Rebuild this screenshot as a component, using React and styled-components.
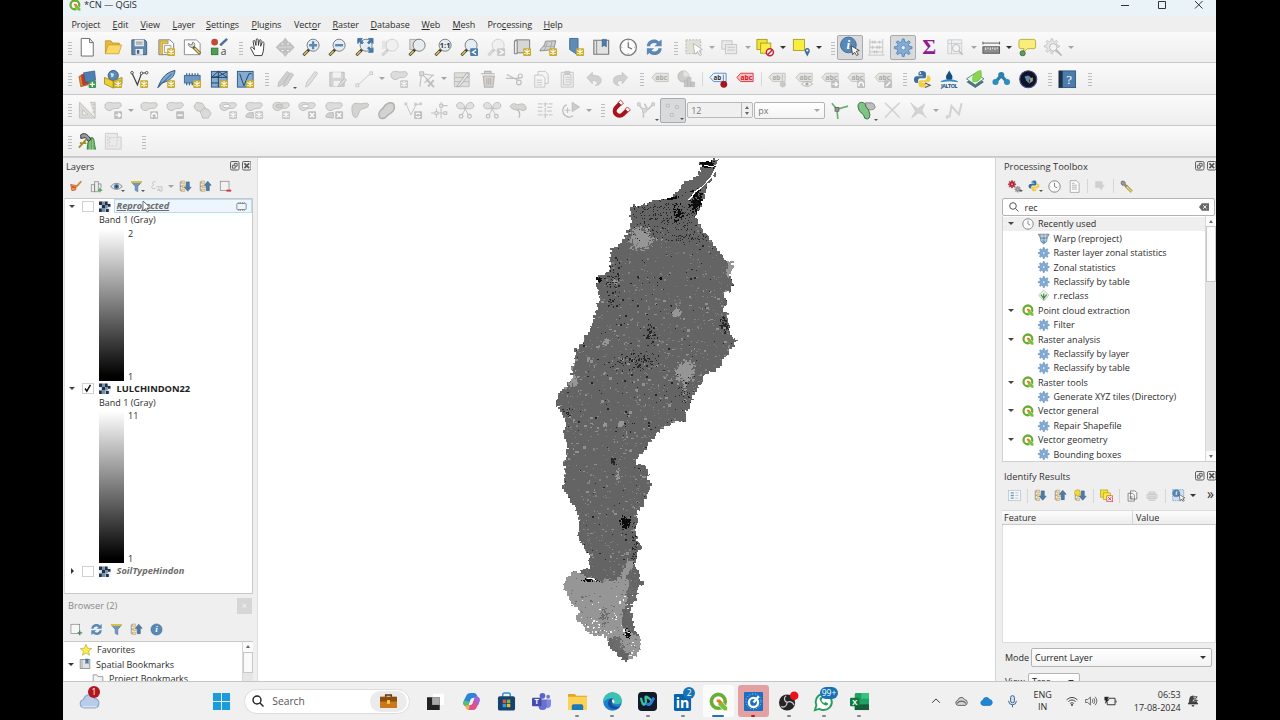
import styled, { createGlobalStyle, css } from "styled-components";

const GlobalStyle = createGlobalStyle`
  * {
    box-sizing: border-box;
  }
  body {
    margin: 0;
    background: #000;
    font-family: "Open Sans", "Noto Sans", sans-serif;
    font-size: 9px;
    color: #2c2c2c;
    overflow: hidden;
  }
`;

/* ---------- icons, drawn on a 20px grid ---------- */

const EDGE = "#bcbcba";
const BLUE = "#5b88b5";

const StarBadge = ({ off }) => (
  <g>
    <rect x="11" y="11" width="8.500" height="8.500" rx="1" fill={off ? "#c8c8c6" : "#c9ae2e"} />
    <path d="M15.200 12v6.500M12.300 13.500l5.800 3.500M12.300 17l5.800-3.500" stroke="#fff" strokeWidth="1.100" />
  </g>
);
const Mag = ({ off, children }) => (
  <g>
    <path d="M8 12.200L1.500 18.700" stroke={off ? "#c9c9c7" : "#3f3a2a"} strokeWidth="3" />
    <path d="M6 14.200L2 18.200" stroke={off ? "#dddddb" : "#e2c159"} strokeWidth="1.600" />
    <circle cx="12" cy="7.800" r="6.500" fill={off ? "#f0f0f0" : "#e6edf2"} stroke={off ? "#cfcfcd" : "#777"} />
    {children}
  </g>
);
const Blob = () => (
  <path
    d="M1 5.500c0-4 4-4.500 8-3.500 3 .6 9-1.500 9.500 1.500s-2.500 5-6 4.600-4 2.600-7 2.200-4.500-2.300-4.500-4.800z"
    fill="#dcdcda"
    stroke={EDGE}
    strokeWidth="1"
  />
);
const GreyBadge = ({ d }) => (
  <g>
    <rect x="11" y="11" width="8.500" height="8.500" rx="1" fill="#bfbfbd" />
    <path d={d} stroke="#fff" strokeWidth="1.500" fill="none" />
  </g>
);
const Tag = ({ text = "abc", fill = "#e4e4e0", line = "#c4c4be", ink = "#aaa" }) => (
  <g>
    <path d="M1 8l4-4.500h13.500v9H5z" fill={fill} stroke={line} />
    <text
      x="4.800"
      y="10.600"
      fontSize="7"
      fontWeight="700"
      fill={ink}
      fontFamily="Open Sans"
      textLength={text.length * 4.200}
      lengthAdjust="spacingAndGlyphs"
    >
      {text}
    </text>
  </g>
);
const ArrowDownUp = ({ up }) => (
  <g>
    <path d="M2 3v14M2 3h5M2 10h5M2 17h5" stroke="#888" fill="none" strokeWidth="1.300" />
    <path d="M4 1.500h5v4H4zM5 8h5v4H5zM4 14.500h5v4H4z" fill="#f0d9a0" stroke="#b79a62" strokeWidth=".8" />
    <path
      d={up ? "M14 2l5.500 6.500h-3V17h-5V8.500h-3z" : "M14 18l5.500-6.500h-3V3h-5v8.500h-3z"}
      fill="#4c7cab"
      stroke="#30567d"
      strokeWidth=".8"
    />
  </g>
);
const gearPath =
  "M9 1h2l.5 3 2 .8L16 3l1.500 1.500-1.800 2.500.8 2 3 .5v2l-3 .5-.8 2 1.800 2.500L16 18l-2.500-1.800-2 .8-.5 3H9l-.5-3-2-.8L4 18l-1.500-1.500L4.300 14l-.8-2-3-.5v-2l3-.5.8-2L2.500 4.500 4 3l2.500 1.800 2-.8z";
const Gear = ({ fill = "#82abd8", line = "#5280b0" }) => (
  <g>
    <path d={gearPath} fill={fill} stroke={line} strokeWidth=".9" />
    <circle cx="10" cy="10.500" r="2.400" fill="#e6eef6" stroke={line} strokeWidth=".8" />
  </g>
);
const Scissors = () => (
  <g fill="#e0e0de" stroke={EDGE}>
    <path d="M9.500 7C9 2 4 0 1.500 3S2 10 9.500 8zM10.500 7C11 2 16 0 18.500 3S18 10 10.500 8z" />
    <path d="M9 7l4.500 8M11 7l-4.500 8" />
    <circle cx="5.500" cy="16.500" r="2" fill="none" strokeWidth="1.300" />
    <circle cx="14.500" cy="16.500" r="2" fill="none" strokeWidth="1.300" />
  </g>
);
const Python = () => (
  <g>
    <path d="M10 1C6 1 6 3 6 4v2h4.500v.7H4C1.500 6.700 1 9 1 10.500S2 14 4 14h1.500v-2.500C5.500 9.500 7 9 8 9h4c1.500 0 2-1 2-2V4c0-2-1.500-3-4-3z" fill="#3b6f9f" />
    <path d="M10 19c4 0 4-2 4-3v-2H9.500v-.7H16c2.500 0 3-2.300 3-3.800S18 6 16 6h-1v2.500c0 2-1.500 2.500-3 2.500H8c-1.500 0-2 1-2 2v3c0 2 1.500 3 4 3z" fill="#f4cd46" />
    <circle cx="8" cy="3.400" r=".9" fill="#fff" />
  </g>
);
const QLogo = () => (
  <g>
    <circle cx="9.800" cy="9.800" r="7.300" fill="#fff" stroke="#6aad35" strokeWidth="3.800" />
    <path d="M9.500 9.500h3.500l6.500 6.500v3.800h-3.800l-6.200-6.200z" fill="#7cbf3c" stroke="#fff" strokeWidth=".7" />
    <path d="M8 8h3.500l3 3-3 .5-3.500-1z" fill="#ee7913" />
  </g>
);
const Refresh = () => (
  <g fill={BLUE}>
    <path d="M2 9c0-5 4-7.500 8-7.500 2 0 4 .7 5 2.200l3-2.200v7.500h-8l3-2.500C11 4.800 6 5 5.500 9z" />
    <path d="M18 11c0 5-4 7.500-8 7.500-2 0-4-.7-5-2.200l-3 2.200V11h8l-3 2.500c2 1.700 7 1.500 7.500-2.500z" />
  </g>
);
const Clock = () => (
  <g>
    <circle cx="10" cy="10" r="8.800" fill="#fbfbfb" stroke="#777" strokeWidth="1.300" />
    <path d="M10 4.500V10l4 2" fill="none" stroke="#666" strokeWidth="1.200" />
    <path d="M10 2.500v1M10 16.500v1M2.500 10h1M16.500 10h1" stroke="#888" />
  </g>
);
const Info = ({ r = 8.5 }) => (
  <g>
    <circle cx="10" cy="10" r={r} fill="#5788b8" stroke="#3f6b97" />
    <text x="10" y="14.500" fontSize="14" fontStyle="italic" fontWeight="700" textAnchor="middle" fill="#fff" fontFamily="Liberation Serif">
      i
    </text>
  </g>
);
const Cursor = () => <path d="M11 8.500l1.500 9.500 2.200-2.600 2.300 3.600 1.800-1.200-2.300-3.400 3.300-.8z" fill="#fff" stroke="#333" strokeWidth=".9" />;
const Funnel = () => (
  <g>
    <path d="M2 3h16l-6 7v8l-4-2v-6z" fill="#6f98bf" stroke="#4a6f94" strokeWidth=".8" />
    <path d="M1.500 1.500h17v3h-17z" fill="#d9c341" />
  </g>
);
const CloudShape = ({ fill, line }) => (
  <path d="M5 16a4 4 0 01-.6-7.900A5.500 5.500 0 0114.800 7 4.600 4.600 0 0115.500 16z" fill={fill} stroke={line} strokeWidth="1.200" />
);
const Mesh = ({ d, children }) => (
  <g>
    <rect x="1.500" y="1.500" width="17" height="17" fill="#84acd2" stroke="#2f567e" />
    <path d={d} fill="none" stroke="#1f3e5c" />
    {children}
  </g>
);

const ICONS = {
  new: <path d="M3.500 .5h9l4 4.500v14.500h-13zM12.500 .5V5h4" fill="#fff" stroke="#666" />,
  open: (
    <g>
      <path d="M1.500 17V3h6l2 2.500h7V8" fill="#e3b93c" stroke="#b98e22" strokeWidth=".8" />
      <path d="M1.500 17l3-9.500h14.500l-3 9.500z" fill="#fbd969" stroke="#c49a2c" strokeWidth=".8" />
    </g>
  ),
  save: (
    <g>
      <path d="M2 2h14l2 2v14H2z" fill="#6388ad" stroke="#43607c" />
      <path d="M5 2h10v7H5zM6 12h8v6H6z" fill="#e6ebef" />
      <path d="M6.500 4.500h7M6.500 6.500h7" stroke="#888" />
      <path d="M7.500 13h2.500v4H7.500z" fill="#43607c" />
    </g>
  ),
  layout: (
    <g>
      <path d="M2 2h12l4 4v12H2z" fill="#fff" stroke="#777" />
      <path d="M3 3h9v3H6v12H3z" fill="#e7c34b" stroke="#9c7f24" strokeWidth=".6" />
      <path d="M8 8h7v8H8z" fill="#f6f6f6" stroke="#999" />
      <StarBadge />
    </g>
  ),
  layouts: (
    <g>
      <path d="M1.500 2h13l4 4v12h-17z" fill="#fff" stroke="#888" />
      <path d="M6 5.500l1.500 2L10 7l.5-2.500c2.500.5 3 3.500 1 5s-4 .5-5-1-1-2-.5-3z" fill="#ddd" stroke="#777" />
      <path d="M11 9.500l7.500 7.500" stroke="#6b6034" strokeWidth="3.400" />
      <path d="M12.500 11l5.500 5.500" stroke="#e7cc67" strokeWidth="1.800" />
    </g>
  ),
  style: (
    <g>
      <circle cx="5" cy="4.500" r="3.600" fill="#c24a32" />
      <path d="M11 8l7.500-7" stroke="#4d7399" strokeWidth="2.800" />
      <rect x="1.500" y="11" width="7" height="7" fill="#4f9e55" stroke="#2f7a38" />
      <text x="11.500" y="18" fontSize="11" fill="#444" fontFamily="Open Sans">
        a
      </text>
    </g>
  ),
  hand: (
    <path
      d="M6 19L2 11.500c-.8-1.600 1-2.400 2-1L6 12.500 4.500 4c-.2-1.700 1.700-1.700 2-.3L7.500 8 7.800 2c.1-1.600 2-1.600 2.100 0L10.200 8l1-5.300c.3-1.400 2.100-1.200 1.900.4L12.600 9l1.500-4c.6-1.300 2.500-.6 2.100.8C15.500 10 16.500 13 14 19z"
      fill="#fff"
      stroke="#333"
    />
  ),
  pan: <path d="M10 1l3 4h-2v3h4V6l4 4-4 4v-2h-4v3h2l-3 4-3-4h2v-3H5v2l-4-4 4-4v2h4V5H7z" fill="#cfcfcd" stroke="#bfbfbd" strokeWidth="1.800" />,
  zoomIn: (
    <Mag>
      <path d="M12 3.500v8.600M7.700 7.800h8.600" stroke={BLUE} strokeWidth="2.600" />
    </Mag>
  ),
  zoomOut: (
    <Mag>
      <path d="M7.700 7.800h8.600" stroke={BLUE} strokeWidth="2.600" />
    </Mag>
  ),
  zoomFull: (
    <g>
      <Mag />
      <path
        d="M3 .5h5L6.500 2.500 9 5 7.500 6.500 5 4 3 6zM19.500 .5h-5l1.500 2L13.500 5 15 6.500 17.500 4l2 2zM19.500 15.500h-5l1.500-2-2.500-2.500L15 9.500l2.500 2.500 2-1.500z"
        fill="#4577a8"
        stroke="#4577a8"
      />
    </g>
  ),
  zoomSel: (
    <g>
      <rect x="1" y="3" width="10" height="9" fill="#e4e4e2" />
      <Mag off />
    </g>
  ),
  zoomLayer: (
    <g>
      <rect x="2" y="1.500" width="10" height="11" fill="#ddd" stroke="#aaa" />
      <Mag />
    </g>
  ),
  zoomNative: (
    <Mag>
      <text x="12" y="10.800" fontSize="8" fontWeight="700" textAnchor="middle" fontFamily="Open Sans" fill="#333">
        1:1
      </text>
    </Mag>
  ),
  zoomLast: (
    <Mag>
      <rect x="11" y="11" width="8.500" height="8.500" rx="1" fill="#4c7cab" />
      <path d="M17.500 12.700L13.500 15.300l4 2.500" stroke="#fff" fill="none" strokeWidth="1.500" />
    </Mag>
  ),
  zoomNext: (
    <Mag off>
      <rect x="11" y="11" width="8.500" height="8.500" rx="1" fill="#c8c8c6" />
      <path d="M13.500 12.700l4 2.600-4 2.500" stroke="#fff" fill="none" strokeWidth="1.500" />
    </Mag>
  ),
  mapNew: (
    <g>
      <path d="M3 2h15v14H3z" fill="#d6d6d6" stroke="#777" />
      <path d="M1.500 3h3v14h-3z" fill="#eee" stroke="#777" />
      <StarBadge />
    </g>
  ),
  map3d: (
    <g>
      <path d="M7 3.500l11-.5-2 9.500-15 1.500c1-4 5-4 6-10.500z" fill="#d0d0ce" stroke="#888" />
      <path d="M9 5l-3 8M14 3.500l-2 10M5 9h12" stroke="#aaa" fill="none" />
      <StarBadge />
    </g>
  ),
  bookmarkNew: (
    <g>
      <path d="M4 .5h9v18l-4.500-3L4 12.500z" fill="#5f8bb5" stroke="#3f6a92" />
      <StarBadge />
    </g>
  ),
  bookmark: (
    <g>
      <path d="M2 2.500h16v15H2z" fill="#e2e2e2" stroke="#777" strokeWidth="1.200" />
      <path d="M5 2.500v15" stroke="#888" />
      <path d="M11 1.500h4.500v8L13.200 8 11 9.500z" fill="#4c7cab" stroke="#2d5780" strokeWidth=".6" />
    </g>
  ),
  clock: <Clock />,
  refresh: <Refresh />,
  select: (
    <g>
      <rect x="1" y="2" width="16" height="15" fill="#dfe0d6" stroke="#b5b5ac" strokeDasharray="2 1.500" />
      <path d="M9 6l1.500 11.500 3-3 2.500 4.500 1.800-1-2.500-4.500 3.500-1z" fill="#fff" stroke="#b5b5b3" />
    </g>
  ),
  selectForm: (
    <g fill="#e9e9e9" stroke="#c4c4c4">
      <rect x="2" y="3" width="11" height="9" />
      <rect x="6" y="7" width="12" height="10" />
      <path d="M8 10h8M8 13h8" />
    </g>
  ),
  deselect: (
    <g>
      <rect x="1" y="1.500" width="11" height="11" fill="#f3e52d" stroke="#a99d23" />
      <rect x="5" y="5.500" width="11" height="11" fill="#f8ec45" stroke="#a99d23" />
      <circle cx="15" cy="15.500" r="3.800" fill="#fff" stroke="#c8202c" strokeWidth="1.600" />
      <path d="M12.500 18l5-5" stroke="#c8202c" strokeWidth="1.600" />
    </g>
  ),
  selectLoc: (
    <g>
      <rect x="1.500" y="1.500" width="12" height="12" fill="#f9ee3e" stroke="#aaa028" />
      <path d="M16.500 20l-2.500-5a2.800 2.800 0 115 0z" fill="#3c6f9e" />
      <circle cx="16.500" cy="13.500" r="1.200" fill="#fff" />
    </g>
  ),
  identify: (
    <g>
      <g transform="translate(-2 -2.500)">
        <Info />
      </g>
      <Cursor />
    </g>
  ),
  abacus: (
    <g fill="none" stroke="#c4c4c4">
      <path d="M3 1v17M17 1v17M1 18.500h18M3 4.500h14M3 10h14M3 15h14" />
      <path d="M6 3v3M8.500 3v3M13.500 3v3M6 8.500v3M11 8.500v3M13.500 8.500v3M8 13.500v3M10.500 13.500v3" strokeWidth="1.700" />
    </g>
  ),
  gear: <Gear />,
  sigma: (
    <text x="10" y="17.500" fontSize="23" fontWeight="700" textAnchor="middle" fill="#8d1d8f" fontFamily="Liberation Serif">
      Σ
    </text>
  ),
  tableFind: (
    <g>
      <path d="M2 2h15v15H2zM2 6h15M6 2v15" fill="#f0f0f0" stroke="#c8ccd0" />
      <circle cx="11" cy="11" r="4" fill="#f3f3f3" stroke="#b8b8b8" />
      <path d="M14 14l4 4" stroke="#bbb" strokeWidth="1.600" />
    </g>
  ),
  ruler: (
    <g>
      <path d="M1 5.500h18M1 4v3M19 4v3" stroke="#555" />
      <rect x="1" y="9.500" width="18" height="7" fill="#8d8d8d" stroke="#555" />
      <path d="M4 10v3M6.500 10v2M9 10v3M11.500 10v2M14 10v3M16.500 10v2" stroke="#eee" />
    </g>
  ),
  tip: (
    <g>
      <path d="M3 1.500h14q2 0 2 2v6q0 2-2 2h-6.500l-5 4 1-4H3q-2 0-2-2v-6q0-2 2-2z" fill="#f9ee79" stroke="#b8ad3b" />
      <circle cx="5" cy="16.500" r="2.800" fill="#5f9a60" stroke="#3e743f" />
    </g>
  ),
  gearOff: (
    <g>
      <g transform="scale(.85)">
        <Gear fill="#e6e6e6" line="#bdbdbd" />
      </g>
      <circle cx="10" cy="10" r="4" fill="#f3f3f3" stroke="#bbb" />
      <path d="M13 13l6 6" stroke="#bbb" strokeWidth="2" />
    </g>
  ),

  dsManager: (
    <g>
      <path d="M1 7l7-3 3 12-8 2z" fill="#e08a2c" stroke="#8a4a18" strokeWidth=".7" />
      <path d="M3 5l9-3 2 12-9 3z" fill="#c33a2c" />
      <path d="M6 3l12-2 1 10-11 2.500z" fill="#4c7fb3" stroke="#2f567e" strokeWidth=".7" />
      <rect x="11.500" y="11.500" width="8" height="8" rx="1" fill="#3d9b55" />
      <path d="M15.500 12.700v5.600M12.700 15.500h5.600" stroke="#fff" strokeWidth="1.500" />
    </g>
  ),
  geopackage: (
    <g>
      <circle cx="10" cy="6" r="5.500" fill="#5b88b5" stroke="#2f567e" />
      <path d="M7 3l4 1-1 3-2 1z" fill="#cfe0ee" />
      <path d="M.5 8l9.500 4 9.500-4v7L10 19.500.5 15z" fill="#f0cf32" stroke="#8f7b17" strokeWidth=".8" />
      <path d="M10 12v7" stroke="#8f7b17" />
      <StarBadge />
    </g>
  ),
  shapefile: (
    <g>
      <path d="M2 3L8 16l4.500-12.500 5.500-.5" fill="none" stroke="#444" strokeWidth="1.300" />
      <g fill="#fff" stroke="#444">
        <circle cx="2.200" cy="3" r="1.400" />
        <circle cx="12.500" cy="3.500" r="1.400" />
        <circle cx="18" cy="3" r="1.400" />
      </g>
      <StarBadge />
    </g>
  ),
  feather: (
    <g>
      <path d="M1 19C5 8 10 2.500 19.500.5 19 7 14 12 5 14z" fill="#7fa9d0" stroke="#28527a" />
      <path d="M1 19L16 4" stroke="#28527a" />
      <StarBadge />
    </g>
  ),
  chip: (
    <g>
      <path d="M4 3.500v13M7 3.500v13M10 3.500v13M13 3.500v13M16 3.500v13" stroke="#3f6a92" strokeWidth="1.400" />
      <rect x="1.500" y="6" width="17" height="8" fill="#6c98c3" stroke="#3f6a92" />
      <StarBadge />
    </g>
  ),
  mesh: (
    <Mesh d="M1.500 8h17M9 1.500v17M1.500 8L9 1.500l9.500 6.500M1.500 8l7.500-1 9.500-5M1.500 14h8">
      <StarBadge />
    </Mesh>
  ),
  virtual: (
    <Mesh d="M4 4l4.500 13L14 4h3">
      <StarBadge />
    </Mesh>
  ),
  pencils: (
    <g fill="#cfcfcd" stroke="#bababa" strokeWidth=".8">
      <path d="M2 18l1-5L12 1.500l3 2L7 16zM8 18l1-5 7-10 3 2-7 11z" />
    </g>
  ),
  pencil: <path d="M4 18.500l1-5L14 1.500l3 2L8 16z" fill="#dfdfdb" stroke="#c4c4c0" />,
  saveEdits: (
    <g>
      <path d="M2 2.500h15.500v15H2z" fill="#d4d4d4" stroke="#bdbdbd" />
      <path d="M5 2.500h9v6H5zM6 12h7v5.500H6z" fill="#f2f2f2" />
      <path d="M11 18l1-3 6-6 2 2-6 6z" fill="#ddd" stroke="#bbb" />
    </g>
  ),
  line: (
    <g stroke="#c9c9c9" fill="#eee">
      <path d="M3 16.500L17 3.500" />
      <rect x="1" y="15" width="3" height="3" />
      <rect x="16" y="2" width="3" height="3" />
    </g>
  ),
  blobNew: (
    <g>
      <Blob />
      <StarBadge off />
    </g>
  ),
  vertex: (
    <g stroke="#c0c0c0" fill="none" strokeWidth="1.200">
      <path d="M3 18l2-14 13 2M5 4l8 8M8 14L18 5" />
      <rect x="3" y="2" width="4" height="4" fill="#ddd" />
      <path d="M10 10l8.500 8.500M18 11l-6 7" strokeWidth="2.200" />
    </g>
  ),
  form: (
    <g>
      <path d="M1.500 3h16v15h-16zM1.500 8h16M1.500 12.500h16" fill="#dedfd9" stroke="#bbb" />
      <path d="M4 18L15 3l2.500 1.500L7 18z" fill="#e6e6e6" stroke="#aaa" />
    </g>
  ),
  trash: (
    <g fill="#d5d1cf" stroke="#b8b3b1" strokeWidth="1.200">
      <path d="M2 4h15M6 4V1.500h7V4M4.500 6.500h12L15 18.500H6z" />
      <path d="M8.500 9v7M10.500 9v7M12.500 9v7" />
    </g>
  ),
  cut: (
    <g fill="none" stroke="#bfbfbf" strokeWidth="1.300">
      <path d="M2 5l12 6M1 9h14" />
      <circle cx="16.500" cy="6.500" r="2.200" />
      <circle cx="15" cy="13.500" r="2.500" />
    </g>
  ),
  copy: (
    <g fill="#f4f4f4" stroke="#c6c6c6">
      <path d="M6.500 1.500h8l3 3v10h-11z" />
      <path d="M3 5.500h8l3 3v10H3zM5 11h6M5 13.500h6M5 16h6" />
    </g>
  ),
  paste: (
    <g fill="#efefef" stroke="#c4c4c4">
      <path d="M3.500 2.500h13v16h-13z" />
      <path d="M6 5h8v11H6zM8 8h5M8 10.500h5M8 13h5" />
      <path d="M7.500 1.500h5v3h-5z" fill="#ccc" />
    </g>
  ),
  undo: <path d="M2 8l6-5.500v3.300c7 0 9.500 2 9.500 5.500s-3 5.500-6.500 5.500c3.500-1 3-6-3-5.500V15z" fill="#d0d0d0" stroke="#c0c0c0" strokeWidth=".7" />,
  redo: <path d="M18 8l-6-5.500v3.300c-7 0-9.500 2-9.500 5.500s3 5.500 6.500 5.500c-3.500-1-3-6 3-5.500V15z" fill="#d0d0d0" stroke="#c0c0c0" strokeWidth=".7" />,
  tag: <Tag />,
  diagram: (
    <g>
      <circle cx="7" cy="7" r="6" fill="#cdcdcb" stroke="#b8b8b6" />
      <path d="M7 7V1a6 6 0 016 6z" fill="#e3e3e1" />
      <path d="M8 18V11h3.500v7zM11.500 18V8H15v10zM15 18v-5h4v5z" fill="#c6c6c4" stroke="#b3b3b1" strokeWidth=".6" />
    </g>
  ),
  tagPin: (
    <g>
      <Tag text="ab" fill="#eaf2fb" line="#4f8bd1" ink="#333" />
      <path d="M15.500 5v8" stroke="#777" />
      <circle cx="16" cy="15.500" r="3.700" fill="#a8141d" />
    </g>
  ),
  tagRed: <Tag fill="#f9bfc2" line="#d9323b" ink="#c81722" />,
  tagOff: (
    <g>
      <Tag text="ab" />
      <path d="M15.500 5v8" stroke="#bbb" />
      <circle cx="16" cy="15.500" r="3.300" fill="#c8c8c6" />
    </g>
  ),
  tagEye: (
    <g>
      <Tag />
      <path d="M7 15q5.500-5.500 12 0-6.500 5.500-12 0z" fill="#f4f4f4" stroke="#b3b3b1" />
      <circle cx="13" cy="15" r="1.700" fill="#aaa" />
    </g>
  ),
  tagMove: (
    <g>
      <Tag />
      <GreyBadge d="M12.500 15.300h5M15.500 13l2.200 2.300-2.200 2.200" />
    </g>
  ),
  tagRotate: (
    <g>
      <Tag />
      <GreyBadge d="M13.500 17.500a2.500 2.500 0 113.500 0" />
    </g>
  ),
  tagEdit: (
    <g>
      <Tag />
      <GreyBadge d="M13 17.500l4.500-4.500" />
    </g>
  ),
  python: (
    <g>
      <Python />
      <path d="M13 14l5.500 2.500-5.500 2.500" fill="none" stroke="#555" strokeWidth="1.200" />
    </g>
  ),
  jaltol: (
    <g>
      <path d="M10 .5c2 4 3.500 5 3.500 7a3.500 3.500 0 01-7 0c0-2 1.500-3 3.500-7z" fill="#144f80" />
      <path d="M1 12.500q9-4 18 0-9-1.500-18 0z" fill="#2a87c0" stroke="#2a87c0" />
      <text x="1" y="19" fontSize="5.800" fontWeight="700" fill="#164a78" fontFamily="Open Sans" textLength="18">
        JALTOL
      </text>
    </g>
  ),
  leafMap: (
    <g>
      <path d="M.5 13L10 7l9.500 6-9.500 6.500z" fill="#4d7083" />
      <path d="M.5 9.500L10 3.500l9.500 6L10 16z" fill="#e8f4ee" stroke="#4d8f7c" />
      <path d="M7.500 12.500C6 6 10 1.500 16 .5c2 7-1 13-8.500 12z" fill="#8cd64a" stroke="#5bab2b" strokeWidth=".6" />
    </g>
  ),
  nodes: (
    <g>
      <path d="M3.500 13L10 6l6.500 7" stroke="#2d7fad" strokeWidth="3.500" fill="none" />
      <circle cx="10" cy="5.500" r="3.300" fill="#2d7fad" />
      <circle cx="3.800" cy="13" r="3.300" fill="#2d8dbd" />
      <circle cx="16.200" cy="13" r="3.300" fill="#2d8dbd" />
    </g>
  ),
  globe: (
    <g>
      <circle cx="10" cy="10" r="9.200" fill="#10142a" stroke="#4a4b80" strokeWidth="1.200" />
      <path d="M6 7l4-1 3 2-2 3 1 4-4-3z" fill="#5f89a8" />
      <path d="M12 9l3-1v4l-3 2z" fill="#b3a179" />
    </g>
  ),
  help: (
    <g>
      <rect x="1" y="1" width="18" height="18" fill="#4c7cab" stroke="#33587c" />
      <rect x="1" y="1" width="4" height="18" fill="#1e2f40" />
      <text x="12" y="15" fontSize="14" textAnchor="middle" fill="#fff" fontFamily="Liberation Serif">
        ?
      </text>
    </g>
  ),

  triangle: <path d="M1.500 1l17 17.500h-17zM5 9.500l5.500 5.500H5zM13 1.500h5.500v17M15.500 4h3M15.500 8h3M15.500 12h3" fill="#dcdad8" stroke="#c2c0be" fillRule="evenodd" />,
  blobMove: (
    <g>
      <Blob />
      <GreyBadge d="M12.500 15.300h5M15.500 13l2.200 2.300-2.200 2.200" />
    </g>
  ),
  blobRotate: (
    <g>
      <Blob />
      <GreyBadge d="M13.500 17.500a2.500 2.500 0 113.500 0" />
    </g>
  ),
  blobScale: (
    <g>
      <Blob />
      <GreyBadge d="M12.500 15.300h5.500" />
    </g>
  ),
  hexes: (
    <g fill="#dadad8" stroke="#bcbcba">
      <path d="M1 6l3-4.500 6 1 3.500 5-3.500 4-6-1z" />
      <path d="M8 12l3-4 5.500 1 3 4.500-3 5-6 0z" />
    </g>
  ),
  ring: (
    <g>
      <Blob />
      <ellipse cx="8" cy="5.500" rx="4" ry="2" fill="#f6f6f6" stroke="#bbb" />
      <StarBadge off />
    </g>
  ),
  part: (
    <g>
      <Blob />
      <path d="M1 17.500c0-5 4-5 8-5v6z" fill="#d0d0ce" stroke="#bbb" />
      <StarBadge off />
    </g>
  ),
  fillRing: (
    <g>
      <Blob />
      <ellipse cx="8" cy="5.500" rx="4" ry="2" fill="#cfcfcd" stroke="#bbb" />
      <StarBadge off />
    </g>
  ),
  delRing: (
    <g>
      <Blob />
      <ellipse cx="8" cy="5.500" rx="4" ry="2" fill="#f6f6f6" stroke="#bbb" />
      <GreyBadge d="M13 13l4.500 4.500M17.500 13L13 17.500" />
    </g>
  ),
  delPart: (
    <g>
      <Blob />
      <path d="M1 17.500c0-5 4-5 8-5v6z" fill="#d0d0ce" stroke="#bbb" />
      <GreyBadge d="M13 13l4.500 4.500M17.500 13L13 17.500" />
    </g>
  ),
  reshape: <path d="M1.500 5c2-4 6-2 9-2s8-2 8.500 1-5 4-8 5c-3 2-3 9-6 9s-5-8-3.500-13z" fill="#d3d3d1" stroke="#b9b9b7" />,
  offset: <path d="M2 14c0-4 3-4 5-7s4-5 8-5 4.500 5 3 8-4 3-6 5-3 4-6 4-4-2-4-5z" fill="#d3d3d1" stroke="#b0b0ae" strokeWidth="1.600" />,
  vNode: (
    <g>
      <path d="M2 3l5.500 12L13 4l5-1" fill="none" stroke="#c2c2c0" />
      <path d="M.5 1.500h3v3h-3zM11 2h3v3h-3zM16.500 1.500h3v3h-3z" fill="#ccc" />
      <GreyBadge d="M12.800 14.500a2.500 2.500 0 014.500 0M17.500 16.200a2.500 2.500 0 01-4.500 0" />
    </g>
  ),
  trim: (
    <g stroke="#c2c2c0" fill="#eee" strokeWidth="1.100">
      <path d="M12 1v18M1 13h18M7 8v10M12 5h7" />
      <path d="M10.500 3.500h3v3h-3zM15 11.500h3v3h-3zM5.500 11.500h3v3h-3z" />
    </g>
  ),
  split: <Scissors />,
  merge: (
    <g>
      <path d="M1 6q3-5 8-2l5-1q5 1 4.500 6-3 3-7.500 0-6 2-10-3z" fill="#d5d5d3" stroke="#bdbdbb" />
      <path d="M8 9q5 2 3 9" stroke="#bbb" fill="none" strokeWidth="1.400" />
    </g>
  ),
  alignLines: <path d="M2 3h16M2 7h6M12 7h6M2 11h6M12 11h6M2 15h16M10 1.500v17" stroke="#cbcbc9" strokeWidth="1.400" strokeDasharray="5 1" />,
  rotate: (
    <g fill="none" stroke="#bcbcba">
      <path d="M5 4a7 7 0 107 12" strokeWidth="1.400" />
      <path d="M3 10h6M6 7v6" />
      <path d="M11 1.500v10l8-5z" fill="#ccc" />
    </g>
  ),
  magnet: (
    <g transform="rotate(-135 10 10)">
      <path d="M2.500 17V9a7.500 7.500 0 0115 0v8H13V9a3 3 0 00-6 0v8z" fill="#a8121c" />
      <path d="M2.500 14.500H7V18H2.500zM13 14.500h4.500V18H13z" fill="#fff" stroke="#a8121c" strokeWidth=".8" />
    </g>
  ),
  snapV: (
    <g stroke="#c6c6c4" fill="#ddd">
      <path d="M2 4l5 6v8M18 3l-6 6-5 2M8 3l3 5" fill="none" strokeWidth="1.800" />
      <path d="M.5 2h3v3h-3zM16 2h3v3h-3zM6 8h4v4H6z" />
    </g>
  ),
  dots: (
    <g fill="#e4e4e4" stroke="#b8b8b8">
      <path d="M2.500 3.500h3v3h-3zM12.500 5h3v3h-3zM7 13.500h3v3H7z" />
    </g>
  ),
  topo: (
    <g>
      <path d="M2 2.500l5.500 6.500 12-3.500M7.500 9l1 10.500" fill="none" stroke="#6ab072" strokeWidth="1.800" />
      <rect x="5.500" y="7" width="4" height="4" fill="#999" stroke="#666" />
    </g>
  ),
  overlap: (
    <g>
      <path d="M9 2h7q3 1 3.500 4t-4 3.500l-5 0z" fill="#bdbdbd" stroke="#888" />
      <path d="M1 6q0-4.500 4-4.500t4.500 4.500q4 3 4.500 9 0 4-3 4.500t-4-4.500Q1 11 1 6z" fill="#7fc486" stroke="#356e3d" />
    </g>
  ),
  cross: <path d="M2 2q8 7 16 16M18 2Q10 9 2 18" stroke="#d2d2d0" strokeWidth="1.600" fill="none" />,
  curve: (
    <g stroke="#cfcfcd" fill="#d3d3d1">
      <path d="M2 2q6 6 8 6l7-5-3 7q2 6 5 8-6-5-9-5l-7 5 4-7z" />
    </g>
  ),
  zig: <path d="M1 16.500h4l2-11 8 9 3-12M5 16.500l-4 2" fill="none" stroke="#d2d2d0" strokeWidth="2.200" />,
  plugin: (
    <g>
      <path d="M10 19c0-8 2-13 5-13s2 5 4 13" fill="#5ba85c" stroke="#2f7a38" />
      <path d="M13 9v10M16 8v11" stroke="#b3d6a6" />
      <path d="M3 3q4-3 8 1l3 4-3 2-3-4-5 1z" fill="#999" stroke="#333" />
      <path d="M2 12h7M1 17L9 8" stroke="#a58b2e" strokeWidth="2" />
    </g>
  ),
  film: (
    <g fill="#eaeaea" stroke="#cccccc">
      <path d="M1.500 1.500v17h17v-13h-4v-4z" />
      <path d="M6 6h8v9H6zM4 4v12" strokeDasharray="2 1.500" />
    </g>
  ),

  brush: (
    <g>
      <path d="M1 7l9 2-1 7-6 1z" fill="#e7a23e" stroke="#b0402d" />
      <path d="M10 11l8-9" stroke="#c98a38" strokeWidth="3" />
      <path d="M3 11l6 1" stroke="#d94e32" strokeWidth="2.500" />
    </g>
  ),
  groupAdd: (
    <g fill="#ececec" stroke="#777">
      <path d="M2 7h5v11H2zM7 2.500h6V18H7zM13 6h4v6" />
      <path d="M15.500 12v7M12 15.500h7" stroke="#4aa05a" strokeWidth="2" />
    </g>
  ),
  eye: (
    <g>
      <path d="M1 10q9-10 18 0-9 9-18 0z" fill="#e9eef2" stroke="#777" strokeWidth="1.300" />
      <circle cx="10" cy="10" r="4" fill="#5b88b5" />
      <circle cx="10" cy="10" r="1.800" fill="#234" />
    </g>
  ),
  funnel: <Funnel />,
  expr: (
    <g fill="none" stroke="#c2c2c2" strokeWidth="1.500">
      <path d="M9 3C4 1 2 5 6 7c-5 2-4 8 2 6M10 10.500h8.500V17H15v-3h-3v3" />
    </g>
  ),
  expand: <ArrowDownUp />,
  collapse: <ArrowDownUp up />,
  remove: (
    <g>
      <rect x="2" y="2" width="14" height="15" fill="#f2f2f2" stroke="#777" />
      <path d="M12 17h7.500" stroke="#d32d3b" strokeWidth="3" />
    </g>
  ),
  addLayer: (
    <g>
      <rect x="1.500" y="2" width="14" height="15" fill="#f7f7f7" stroke="#777" />
      <path d="M15.500 12v7.500M12 15.800h7.500" stroke="#4a8a5a" strokeWidth="2.200" />
    </g>
  ),
  info: <Info />,
  star: <path d="M10 .5l2.600 6.500 6.900.6-5.300 4.300 1.700 7L10 15.200l-5.900 3.700 1.700-7L.5 7.600 7.400 7z" fill="#fbee4a" stroke="#b3a12b" />,
  folder: <path d="M2 17V3h6l2 3h8v11z" fill="#f4f4f4" stroke="#888" strokeWidth="1.300" />,
  raster: (
    <g>
      <path d="M0 1h20v18H0z" fill="#e4ecf3" />
      <path d="M0 1h6v6H0zM10 1h5v6h-5zM5 7h6v6H5zM15 5h5v5h-5zM0 13h5v6H0zM12 14h5v5h-5z" fill="#232f40" />
      <path d="M6 1h4v6H6zM11 7h4v6h-4zM5 13h6v6H5z" fill="#6f8fb1" />
    </g>
  ),
  memory: (
    <g fill="none" stroke="#777" strokeWidth="1.400">
      <rect x="1.500" y="4.500" width="17" height="11" rx="1" />
      <path d="M5 4.500V2M8 4.500V2M12 4.500V2M15 4.500V2M5 18v-2.500M8 18v-2.500M12 18v-2.500M15 18v-2.500" />
    </g>
  ),
  gears: (
    <g>
      <g transform="scale(.62)">
        <Gear fill="#c5222e" line="#8d111b" />
      </g>
      <g transform="translate(10 9) scale(.5)">
        <Gear fill="#999" line="#666" />
      </g>
    </g>
  ),
  pythonSmall: <Python />,
  doc: <path d="M3.500 1h9.500l4 4v14H3.500zM6 8h8M6 11h8M6 14h8M6 5h4" fill="#fff" stroke="#888" />,
  playOff: <path d="M2 2h12v6h4l-6 9-3-4H2z" fill="#d0d0d0" />,
  wrench: (
    <g>
      <path d="M2 2.500c3-2 7 0 6 4l3 2.500-2 2-3-3C3 9 1 6 2 2.500z" fill="#999" stroke="#555" />
      <path d="M9 9l9 9" stroke="#96803a" strokeWidth="4.400" />
      <path d="M10 10l8 8" stroke="#f0dc77" strokeWidth="2.200" />
    </g>
  ),
  grass: (
    <g>
      <path d="M10 .5l9 8.500-9 10-9-10z" fill="#eef3ea" stroke="#9aa896" />
      <path d="M10 17V6M10 14.500L5 8M10 14.500l5-6.500" stroke="#3f8a3e" strokeWidth="2" />
    </g>
  ),
  warp: (
    <g>
      <path d="M.5 2h19l-4 7h-11z" fill="#8fa9bd" stroke="#4c6a82" />
      <path d="M4 9h12l-1 6-5 4-5-4z" fill="#6e9bc0" stroke="#4c6a82" />
      <path d="M4 5.500h12M7 2v14M13 2v14M4 12h12" stroke="#dfe9f1" />
    </g>
  ),
  qgis: <QLogo />,
  tableView: (
    <g>
      <rect x="1" y="2" width="18" height="16" fill="#f4f8fb" stroke="#a9bccd" />
      <path d="M4 6h5M4 10h5M4 14h5" stroke="#6f98bf" strokeWidth="2" />
      <path d="M11 6h5M11 10h5M11 14h5" stroke="#aaa" />
    </g>
  ),
  expandNew: (
    <g>
      <ArrowDownUp />
      <circle cx="5.500" cy="6" r="4.500" fill="#f6d936" stroke="#c9a92a" />
    </g>
  ),
  clear: (
    <g>
      <rect x="1" y="1.500" width="11" height="11" fill="#f3e52d" stroke="#a99d23" />
      <rect x="5" y="6" width="11" height="10" fill="#f8ec45" stroke="#a99d23" />
      <rect x="10.500" y="10.500" width="9" height="9" fill="#fff" stroke="#d34" />
      <path d="M12.500 12.500l5 5M17.500 12.500l-5 5" stroke="#d34" strokeWidth="1.500" />
    </g>
  ),
  copyDoc: <path d="M7.500 1.500H15l3 3v10.500H7.500zM3.500 5.500H11l3 3v10H3.500zM6 11.500h5M6 14.500h5" fill="#fafafa" stroke="#666" strokeWidth="1.200" />,
  print: (
    <g fill="#dcdcdc" stroke="#c4c4c4">
      <path d="M5 3h10v4H5zM1.500 7h17v7h-17zM5 11h10v6.500H5z" />
    </g>
  ),
  identifySel: (
    <g>
      <rect x="1" y="1" width="17" height="17" fill="#cfe0f0" stroke="#5b88b5" strokeDasharray="2 1.500" />
      <g transform="scale(.65)">
        <Info />
      </g>
      <Cursor />
    </g>
  ),
};

const Glyph = styled.svg`
  width: ${(p) => p.$size || 20}px;
  height: ${(p) => p.$size || 20}px;
  flex: none;
  display: block;
  overflow: visible;
`;

const Icon = ({ name, size }) => (
  <Glyph viewBox="0 0 20 20" $size={size} fill="none">
    {ICONS[name]}
  </Glyph>
);

/* ---------- window ---------- */

const Screen = styled.div`
  width: 1280px;
  height: 720px;
  padding: 0 64px 0 63px;
  background: #000;
`;

const Desktop = styled.div`
  width: 1153px;
  height: 720px;
  display: flex;
  flex-direction: column;
  background: #efefef;
  overflow: hidden;
`;

const TitleBar = styled.div`
  height: 16px;
  flex: none;
  display: flex;
  align-items: center;
  padding: 0 13.500px 6px 6px;
  background: #eaf3f8;
  gap: 3px;
`;

const TitleText = styled.span`
  font-size: 9.3px;
  letter-spacing: -0.1px;
  line-height: 10px;
  flex: 1;
`;

const WindowControls = styled.svg`
  width: 82px;
  height: 10px;
  fill: none;
  stroke: #333;
`;

const MenuBar = styled.div`
  height: 16px;
  flex: none;
  display: flex;
  align-items: center;
  padding-left: 8.500px;
`;

const MenuItem = styled.span`
  width: ${(p) => p.$w}px;
  white-space: nowrap;
  letter-spacing: -0.05px;
  u {
    text-underline-offset: 1px;
    text-decoration-thickness: 1px;
  }
`;

const Bar = styled.div`
  height: 31.300px;
  flex: none;
  display: flex;
  align-items: center;
  padding-top: 1px;
  border-bottom: 1px solid #c8c8c8;
  background: linear-gradient(#fafafa, #eeeeee);
`;

const Slot = styled.span`
  width: 26.400px;
  height: 25px;
  flex: none;
  position: relative;
  display: flex;
  align-items: center;
  justify-content: center;
  ${(p) =>
    p.$pressed &&
    css`
      background: #d9dadb;
      border: 1px solid #ababab;
      border-radius: 2px;
    `}
`;

const Grip = styled.span`
  width: 4px;
  height: 14px;
  flex: none;
  margin: 0 2.200px 0 ${(p) => (p.$first ? 4.5 : 7)}px;
  opacity: 0.6;
  background-image: radial-gradient(circle, #999 0.6px, transparent 0.9px);
  background-size: 2px 3px;
`;

const Gap = styled.span`
  width: 9px;
  flex: none;
`;

const Rule = styled.span`
  width: 1px;
  height: 14px;
  margin: 0 2px 0 3px;
  flex: none;
  background: #d6d6d6;
`;

const Caret = styled.span`
  width: 0;
  height: 0;
  flex: none;
  margin: 0 ${(p) => p.$gap ?? 1.7}px;
  border: 3px solid transparent;
  border-top-color: ${(p) => (p.$off ? "#a5a5a5" : "#333")};
  border-bottom: 0;
`;

const CornerCaret = styled.i`
  position: absolute;
  right: 1px;
  bottom: 2px;
  border: 2px solid transparent;
  border-top-color: #555;
  border-bottom: 0;
`;

const SpinBox = styled.div`
  width: 66px;
  height: 16px;
  margin: 0 1px;
  display: flex;
  align-items: center;
  justify-content: space-between;
  padding-left: 3px;
  border: 1px solid #b9b9b9;
  border-radius: 2px;
  background: #f0f0f0;
  color: #777;
`;

const Steps = styled.span`
  width: 11px;
  height: 14px;
  display: flex;
  flex-direction: column;
  align-items: center;
  justify-content: center;
  gap: 3px;
  border-left: 1px solid #b9b9b9;
`;

const StepUp = styled.i`
  border: 2.500px solid transparent;
  border-bottom: 3px solid #666;
  border-top: 0;
`;

const StepDown = styled.i`
  border: 2.500px solid transparent;
  border-top: 3px solid #666;
  border-bottom: 0;
`;

const Combo = styled.div`
  width: ${(p) => p.$w}px;
  height: ${(p) => p.$h || 17}px;
  margin-right: ${(p) => p.$mr || 0}px;
  flex: none;
  display: flex;
  align-items: center;
  justify-content: space-between;
  padding: 0 3px;
  border: 1px solid #b4b4b4;
  border-radius: 2px;
  background: linear-gradient(#fff, #f3f3f3);
  color: ${(p) => (p.$off ? "#777" : "#222")};
`;

/* "|" grip, "_" gap, "/" rule, "v" caret, "d" dimmed caret, "*" pressed, "," corner caret */
const MAIN_BAR =
  "| new open save layout layouts style | hand pan zoomIn zoomOut zoomFull zoomSel zoomLayer zoomNative zoomLast zoomNext mapNew map3d bookmarkNew bookmark clock refresh | select d selectForm d deselect v selectLoc v | identify* abacus gear* sigma tableFind d ruler v tip gearOff d";
const DATA_BAR =
  "| dsManager geopackage shapefile feather chip mesh virtual | pencils, pencil saveEdits line d blobNew vertex d form trash cut copy paste undo redo | tag diagram / tagPin tagRed / tagOff tagEye tagMove tagRotate tagEdit | python jaltol leafMap nodes globe | help |";
const DIGITIZE_BAR =
  "| triangle blobMove d blobRotate blobScale hexes ring part fillRing delRing delPart reshape offset vNode trim split split merge alignLines rotate d | magnet snapV, dots*, #size #unit topo overlap, cross curve d zig";

const Tools = ({ items }) =>
  items.split(" ").map((item, i) => {
    if (item === "|") return <Grip key={i} $first={i === 0} />;
    if (item === "_") return <Gap key={i} />;
    if (item === "/") return <Rule key={i} />;
    if (item === "v" || item === "d") return <Caret key={i} $off={item === "d"} />;
    if (item === "#size")
      return (
        <SpinBox key={i}>
          12
          <Steps>
            <StepUp />
            <StepDown />
          </Steps>
        </SpinBox>
      );
    if (item === "#unit")
      return (
        <Combo key={i} $w={71} $off $mr={1}>
          px
          <Caret $off />
        </Combo>
      );
    return (
      <Slot key={i} $pressed={item.includes("*")}>
        <Icon name={item.replace(/[*,]/g, "")} size={18.5} />
        {item.includes(",") && <CornerCaret />}
      </Slot>
    );
  });

// label, width of its slot, mnemonic letter
const MENU = [
  ["Project", 41, "j"],
  ["Edit", 28, "E"],
  ["View", 32, "V"],
  ["Layer", 33.5, "L"],
  ["Settings", 45.5, "S"],
  ["Plugins", 42.5, "P"],
  ["Vector", 38.5, "o"],
  ["Raster", 38, "R"],
  ["Database", 51, "D"],
  ["Web", 31, "W"],
  ["Mesh", 35, "M"],
  ["Processing", 56, "c"],
  ["Help", 30, "H"],
];

const MenuLabel = ({ word, mnemonic }) => {
  const at = word.indexOf(mnemonic);
  return (
    <>
      {word.slice(0, at)}
      <u>{mnemonic}</u>
      {word.slice(at + 1)}
    </>
  );
};

/* ---------- docks ---------- */

const Work = styled.div`
  height: 525px;
  flex: none;
  display: flex;
  border-top: 1px solid #cfcfcf;
  border-bottom: 1px solid #c6c6c6;
`;

const LeftDock = styled.div`
  width: 190px;
  padding-left: 1px;
  flex: none;
  display: flex;
  flex-direction: column;
  overflow: hidden;
`;

const RightDock = styled.div`
  width: 221px;
  padding-left: 6px;
  flex: none;
  display: flex;
  flex-direction: column;
  overflow: hidden;
  border-left: 1px solid #d5d5d5;
`;

const Canvas = styled.div`
  flex: 1;
  margin-left: 4px;
  min-width: 0;
  background: #fff;
  border-left: 1px solid #ddd;
`;

const DockTitle = styled.div`
  height: ${(p) => p.$h}px;
  flex: none;
  display: flex;
  align-items: center;
  gap: 2px;
  padding: ${(p) => p.$pt || 0}px ${(p) => p.$pr}px 0 ${(p) => p.$pl || 2}px;
  font-size: 9.3px;
  color: ${(p) => (p.$off ? "#888" : "#333")};
  span {
    flex: 1;
  }
`;

const TitleButton = styled.svg`
  width: 9.500px;
  height: 9.500px;
  fill: none;
  stroke: #555;
`;

const DockButtons = () => (
  <>
    <TitleButton viewBox="0 0 10 10">
      <rect x=".5" y=".5" width="9" height="9" rx="1.500" />
      <path d="M2.500 4.500h3v3h-3zM4.500 4V2.500h3v3H6" />
    </TitleButton>
    <TitleButton viewBox="0 0 10 10">
      <rect x=".5" y=".5" width="9" height="9" rx="1.500" />
      <path d="M2.500 2.500l5 5M7.500 2.500l-5 5" strokeWidth="1.700" />
    </TitleButton>
  </>
);

const DockBar = styled.div`
  height: ${(p) => p.$h}px;
  margin-bottom: ${(p) => p.$mb || 0}px;
  flex: none;
  display: flex;
  align-items: center;
  padding-left: ${(p) => p.$pl}px;
`;

const SmallSlot = styled.span`
  width: ${(p) => p.$w || 20}px;
  flex: none;
  height: 16px;
  position: relative;
  display: flex;
  align-items: center;
  justify-content: center;
`;

const More = styled(SmallSlot)`
  width: 20px;
  margin-left: 3px;
  font-size: 14px;
  line-height: 12px;
  padding-bottom: 3px;
`;

const LayerTree = styled.div`
  height: 395.500px;
  flex: none;
  background: #fff;
  border: 1px solid #c8c8c8;
  border-left-color: #ddd;
  overflow: hidden;
`;

const LayerRow = styled.div`
  height: 14.300px;
  display: flex;
  align-items: center;
  padding-left: 3px;
`;

const Twisty = styled.span`
  width: 14px;
  flex: none;
  display: flex;
  margin-right: ${(p) => p.$pull || 0}px;
  padding-left: 0.500px;
  i {
    border: 3px solid transparent;
    ${(p) =>
      p.$closed
        ? css`
            border-left: 3.500px solid #333;
            border-right: 0;
            margin-left: 2px;
          `
        : css`
            border-top: 3.500px solid #444;
            border-bottom: 0;
          `}
  }
`;

const CheckBox = styled.span`
  width: 11.500px;
  height: 11px;
  flex: none;
  display: flex;
  margin-right: 5.500px;
  background: #fff;
  border: 1px solid #d0d0d0;
  svg {
    width: 10px;
    height: 9px;
    fill: none;
    stroke: #111;
    stroke-width: 1.600px;
  }
`;

const LayerName = styled.span`
  height: 14px;
  flex: 1;
  display: flex;
  align-items: center;
  justify-content: space-between;
  margin-left: 3px;
  padding: 0 4px 0 2px;
  line-height: 12px;
  font-weight: 700;
  font-size: 9.3px;
  color: ${(p) => (p.$italic ? "#6c6c6c" : "#222")};
  font-style: ${(p) => (p.$italic ? "italic" : "normal")};
  text-decoration: ${(p) => (p.$hover ? "underline" : "none")};
  border: 1px solid ${(p) => (p.$hover ? "#b9dcee" : "transparent")};
  background: ${(p) => (p.$hover ? "#ecf6fc" : "none")};
`;

const BandRow = styled.div`
  height: 14.200px;
  padding-left: 34px;
  line-height: 14px;
`;

const Ramp = styled.div`
  height: 154px;
  padding: 1px 0 1px 34px;
  display: flex;
  gap: 4px;
`;

const RampBar = styled.div`
  width: 25px;
  background: linear-gradient(#fff, #000 97%);
`;

const RampLabels = styled.div`
  display: flex;
  flex-direction: column;
  justify-content: space-between;
  line-height: 9px;
`;

const Layer = ({ name, italic, hover, checked, closed, max, min }) => (
  <>
    <LayerRow>
      <Twisty $closed={closed}>
        <i />
      </Twisty>
      <CheckBox>
        {checked && (
          <svg viewBox="0 0 10 10">
            <path d="M2 5l2 3 4-7" />
          </svg>
        )}
      </CheckBox>
      <Icon name="raster" size={11.5} />
      <LayerName $italic={italic} $hover={hover}>
        {name}
        {hover && <Icon name="memory" size={11} />}
      </LayerName>
    </LayerRow>
    {max && (
      <>
        <BandRow>Band 1 (Gray)</BandRow>
        <Ramp>
          <RampBar />
          <RampLabels>
            <span>{max}</span>
            <span>{min}</span>
          </RampLabels>
        </Ramp>
      </>
    )}
  </>
);

const BrowserBody = styled.div`
  flex: 1;
  display: flex;
  background: #fff;
  border-top: 1px solid #c8c8c8;
  overflow: hidden;
`;

const BrowserTree = styled.div`
  flex: 1;
  padding-top: 1px;
`;

const BrowserRow = styled.div`
  height: 14.400px;
  display: flex;
  align-items: center;
  gap: 5px;
  padding-left: ${(p) => p.$pl}px;
`;

const ClosedButton = styled.div`
  width: 15px;
  height: 16px;
  background: #d6d6d6;
  color: #f4f4f4;
  text-align: center;
  line-height: 15px;
`;

const ScrollTrack = styled.div`
  width: 11px;
  flex: none;
  display: flex;
  flex-direction: column;
  align-items: center;
  border-left: 1px solid #d8d8d8;
  background: #e6e6e6;
`;

const ScrollEnd = styled.div`
  width: 10px;
  height: 10px;
  flex: none;
  display: flex;
  align-items: center;
  justify-content: center;
  background: #fafafa;
`;

const Thumb = styled.div`
  width: 10px;
  height: ${(p) => p.$h}px;
  background: #fafafa;
  border: 1px solid #c8c8c8;
`;

const Filler = styled.div`
  flex: 1;
`;

const SearchField = styled.div`
  height: 18px;
  flex: none;
  display: flex;
  align-items: center;
  gap: 5.500px;
  margin-right: 1px;
  padding: 0 5px 0 6px;
  background: #fff;
  border: 1px solid #b4b4b4;
  border-radius: 2px;
  span {
    flex: 1;
  }
  svg {
    width: 10px;
    height: 10px;
    fill: none;
    stroke: #555;
  }
`;

const AlgoBox = styled.div`
  height: 246px;
  flex: none;
  display: flex;
  background: #fff;
  border: 1px solid #d0d0d0;
  border-width: 0 0 1px 1px;
`;

const AlgoList = styled.div`
  flex: 1;
  padding-top: 0.500px;
  overflow: hidden;
`;

const AlgoRow = styled.div`
  height: 14.400px;
  display: flex;
  align-items: center;
  gap: 4.500px;
  white-space: nowrap;
  padding-left: ${(p) => (p.$group ? 4 : 34.5)}px;
  background: ${(p) => (p.$lit ? "#efefef" : "none")};
`;

const ALGOS = [
  ["clock", "Recently used", true],
  ["warp", "Warp (reproject)"],
  ["gear", "Raster layer zonal statistics"],
  ["gear", "Zonal statistics"],
  ["gear", "Reclassify by table"],
  ["grass", "r.reclass"],
  ["qgis", "Point cloud extraction", true],
  ["gear", "Filter"],
  ["qgis", "Raster analysis", true],
  ["gear", "Reclassify by layer"],
  ["gear", "Reclassify by table"],
  ["qgis", "Raster tools", true],
  ["gear", "Generate XYZ tiles (Directory)"],
  ["qgis", "Vector general", true],
  ["gear", "Repair Shapefile"],
  ["qgis", "Vector geometry", true],
  ["gear", "Bounding boxes"],
];

const ResultHead = styled.div`
  height: 15px;
  flex: none;
  display: flex;
  align-items: center;
  background: linear-gradient(#fdfdfd, #ececec);
  border-bottom: 1px solid #c8c8c8;
  border-top: 1px solid #ddd;
  span {
    width: 131px;
    padding-left: 2px;
    border-right: 1px solid #d5d5d5;
  }
  b {
    padding-left: 3px;
    font-weight: 400;
  }
`;

const ResultBody = styled.div`
  height: 118px;
  flex: none;
  background: #fff;
  border: 1px solid #ddd;
  border-top: 0;
`;

const FieldRow = styled.div`
  height: ${(p) => p.$h}px;
  flex: none;
  display: flex;
  align-items: center;
  padding-left: 3px;
  > span {
    width: ${(p) => p.$label}px;
  }
`;

/* ---------- raster map ---------- */

const OUTLINE = [
  [699, 161], [705, 163], [712, 158], [720, 160], [716, 165], [715, 176], [710, 181], [706, 188], [704, 197], [701, 204], [698, 213],
  [695, 219], [700, 226], [705, 234], [711, 242], [718, 250], [724, 258], [733, 263], [732, 270], [730, 280], [734, 285], [731, 291],
  [724, 294], [726, 300], [724, 311], [728, 313], [729, 330], [733, 338], [737, 341], [733, 349], [727, 355], [722, 364], [715, 371],
  [706, 374], [702, 383], [697, 391], [693, 398], [690, 407], [685, 413], [685, 421], [672, 423], [663, 428], [655, 438], [651, 442],
  [645, 451], [638, 455], [637, 464], [643, 466], [650, 470], [648, 479], [652, 485], [647, 496], [643, 508], [637, 513], [638, 522],
  [636, 530], [637, 540], [641, 546], [637, 555], [634, 566], [638, 573], [639, 580], [645, 582], [638, 590], [637, 600], [632, 604],
  [631, 612], [633, 620], [635, 632], [641, 638], [641, 650], [636, 656], [628, 662], [622, 658], [615, 651], [609, 645], [607, 637],
  [598, 636], [588, 632], [581, 622], [575, 616], [580, 609], [572, 605], [567, 594], [564, 586], [565, 579], [572, 573], [583, 571],
  [589, 567], [590, 554], [583, 546], [578, 535], [580, 522], [576, 508], [568, 495], [563, 486], [565, 475], [564, 462], [568, 446],
  [563, 435], [566, 424], [563, 413], [556, 404], [558, 393], [565, 386], [571, 380], [573, 365], [577, 352], [575, 349], [585, 338],
  [593, 322], [596, 310], [599, 296], [597, 286], [597, 276], [606, 273], [610, 264], [611, 248], [618, 245], [624, 236], [629, 230],
  [631, 220], [629, 206], [640, 205], [655, 200], [670, 197], [678, 192], [681, 184], [688, 181], [695, 177], [700, 171], [702, 166],
];

const URBAN = [
  [560, 574], [575, 570], [585, 576], [600, 581], [615, 580], [622, 576], [623, 569], [627, 560], [633, 560], [633, 568], [626, 577],
  [632, 583], [626, 592], [628, 604], [622, 612], [622, 625], [630, 634], [644, 638], [644, 652], [632, 663], [626, 652], [612, 640],
  [605, 642], [580, 634], [560, 600],
];

const makeRandom = (seed) => {
  let s = seed;
  return () => {
    s = (s * 16807) % 2147483647;
    return s / 2147483647;
  };
};

const rnd = makeRandom(4711);

const jagged = (points, amount) => {
  const out = [];
  points.forEach(([x, y], i) => {
    const [nx, ny] = points[(i + 1) % points.length];
    const steps = Math.max(1, Math.round(Math.hypot(nx - x, ny - y) / 2));
    for (let k = 0; k < steps; k++) {
      const t = k / steps;
      const px = Math.round(x + (nx - x) * t + (rnd() - 0.5) * amount);
      const py = Math.round(y + (ny - y) * t + (rnd() - 0.5) * amount);
      out.push(out.length ? `H${px}V${py}` : `M${px} ${py}`);
    }
  });
  return out.join("") + "Z";
};

const cell = (x, y, w, h) => `M${x.toFixed(1)} ${y.toFixed(1)}h${w}v${h}h-${w}z`;

const scatter = (count, [x0, y0, x1, y1], size) => {
  let d = "";
  for (let i = 0; i < count; i++) {
    const w = rnd() < 0.7 ? size : size * 2;
    d += cell(x0 + rnd() * (x1 - x0), y0 + rnd() * (y1 - y0), w, rnd() < 0.7 ? size : w);
  }
  return d;
};

const cluster = (cx, cy, rx, ry, count, size = 1) => {
  let d = "";
  for (let i = 0; i < count; i++) {
    const gx = (rnd() + rnd() + rnd() - 1.5) / 1.5;
    const gy = (rnd() + rnd() + rnd() - 1.5) / 1.5;
    d += cell(cx + gx * rx * 1.5, cy + gy * ry * 1.5, size, size);
  }
  return d;
};

const landPath = jagged(OUTLINE, 3);
const urbanPath = jagged(URBAN, 4);

const villages = scatter(1500, [555, 225, 740, 580], 1);
const hamlets = scatter(420, [558, 290, 738, 575], 1.5);
const darkDust =
  scatter(320, [555, 240, 740, 560], 1) +
  cluster(665, 215, 45, 22, 300, 1) +
  cluster(690, 238, 28, 6, 60, 1) +
  cluster(612, 286, 9, 24, 60, 1.4) +
  cluster(650, 333, 5, 10, 34, 1.4) +
  cluster(635, 360, 22, 9, 80, 1.3) +
  cluster(724, 324, 5, 7, 46, 1.4) +
  cluster(684, 392, 8, 14, 26, 1) +
  cluster(613, 461, 3, 3, 18, 1.3) +
  cluster(568, 412, 7, 5, 16, 1.2) +
  cluster(634, 545, 3, 22, 46, 1);
const darkSolid =
  cluster(697, 201, 7, 11, 150, 1.6) +
  cluster(706, 163, 10, 4, 80, 1.5) +
  cluster(671, 197, 6, 2, 36, 1.5) +
  cluster(677, 213, 5, 8, 50, 1.4) +
  cluster(625, 522, 5, 6, 80, 1.6) +
  cluster(598, 279, 3, 3, 22, 1.2) +
  cluster(660, 278, 1.4, 2, 14, 1.1) +
  cluster(590, 580, 7, 2, 28, 1.1) +
  cluster(626, 633, 4, 6, 26, 1.3);
const towns =
  cluster(640, 238, 9, 9, 480, 1.5) +
  cluster(646, 238, 16, 2, 60, 1.2) +
  cluster(684, 371, 8, 9, 380, 1.5) +
  cluster(684, 385, 2, 18, 50, 1.2) +
  cluster(676, 312, 4, 4, 90, 1.4) +
  cluster(573, 380, 5, 5, 80, 1.4) +
  cluster(730, 268, 4, 8, 140, 1.6) +
  cluster(605, 341, 2.5, 3, 40, 1.3) +
  cluster(614, 281, 2, 2, 24, 1.3) +
  cluster(620, 423, 2.5, 2.5, 50, 1.3) +
  cluster(604, 424, 2, 2, 26, 1.3) +
  cluster(617, 475, 2, 6, 36, 1.2);
const urbanGrey =
  cluster(632, 600, 6, 22, 240, 1.4) +
  cluster(604, 616, 4, 10, 50, 1.2) +
  cluster(616, 644, 7, 7, 120, 1.4) +
  scatter(90, [566, 578, 640, 655], 1);
const urbanWhite = scatter(50, [578, 595, 638, 655], 1.1) + cluster(592, 630, 10, 5, 16, 1.2);

const MapSvg = styled.svg`
  display: block;
  width: 736px;
  height: 523px;
`;

const RiverBasin = () => (
  <MapSvg viewBox="258 158 736 523" shapeRendering="crispEdges">
    <clipPath id="basin">
      <path d={landPath} />
    </clipPath>
    <path d={landPath} fill="#646464" />
    <g clipPath="url(#basin)">
      <path d={villages} fill="#818181" />
      <path d={hamlets} fill="#919191" />
      <path d={urbanPath} fill="#969696" />
      <path d={urbanGrey} fill="#6c6c6c" />
      <path d={towns} fill="#969696" />
      <path d={darkDust} fill="#252525" />
      <path d={darkSolid} fill="#0c0c0c" />
      <path d={urbanWhite} fill="#f4f4f4" />
      <path d="M716 168l-4 8-5 6-6 6-6 4-4 6-3 2" stroke="#fff" strokeWidth="1.400" fill="none" />
      <path d="M704 165l8 2 6-3" stroke="#fff" fill="none" />
      <path d="M587 579q6-2 9 2" stroke="#fff" fill="none" />
    </g>
  </MapSvg>
);

/* ---------- taskbar ---------- */

const Taskbar = styled.div`
  height: 37.800px;
  flex: none;
  display: flex;
  align-items: center;
  background: #f0f0f0;
`;

const TaskSlot = styled.span`
  width: ${(p) => p.$w || 35.25}px;
  height: 34px;
  margin-left: ${(p) => p.$ml || 0}px;
  flex: none;
  position: relative;
  display: flex;
  align-items: center;
  justify-content: center;
`;

const AppTile = styled.span`
  width: 31px;
  height: 32px;
  display: flex;
  align-items: center;
  justify-content: center;
  border-radius: 3px;
  background: ${(p) => p.$bg || "none"};
`;

const RunMark = styled.i`
  position: absolute;
  bottom: ${(p) => (p.$wide ? 1 : 1.5)}px;
  width: ${(p) => (p.$wide ? 12 : 4)}px;
  height: 2px;
  border-radius: 1px;
  background: ${(p) => p.$c || "#858585"};
`;

const Badge = styled.b`
  position: absolute;
  top: ${(p) => p.$top ?? 3}px;
  left: ${(p) => p.$left}px;
  min-width: 12px;
  height: 12px;
  padding: 0 1.500px;
  border-radius: 6px;
  background: ${(p) => p.$bg || "#1673b8"};
  color: #fff;
  font-size: 8.5px;
  font-weight: 400;
  line-height: 12px;
  text-align: center;
`;

const SearchPill = styled.div`
  width: 166px;
  height: 25px;
  margin: 0 7.500px 0 5px;
  flex: none;
  display: flex;
  align-items: center;
  gap: 8px;
  padding: 0 2px 0 7px;
  border: 1px solid #dcdcdc;
  border-radius: 13px;
  background: #fff;
  font-size: 10.3px;
  color: #555;
  span {
    flex: 1;
  }
`;

const Briefcase = styled.div`
  width: 37px;
  height: 21px;
  display: flex;
  align-items: center;
  justify-content: center;
  border-radius: 11px;
  background: #ebebeb;
`;

const Language = styled.div`
  width: 36px;
  text-align: center;
  line-height: 12.500px;
  font-size: 9px;
`;

const DateTime = styled.div`
  width: 61px;
  text-align: right;
  line-height: 13px;
  font-size: 9px;
`;

const APPS = {
  start: <path d="M1 1h8.500v8.500H1zM10.500 1H19v8.500h-8.500zM1 10.500h8.500V19H1zM10.500 10.500H19V19h-8.500z" fill="#1c9ddb" />,
  weather: (
    <g>
      <CloudShape fill="#b8cdea" line="#8fa9cf" />
      <path d="M3 15h14" stroke="#dce8f7" />
    </g>
  ),
  taskView: (
    <g>
      <rect x="7" y="1" width="13" height="13" fill="#fff" />
      <rect x="0" y="5" width="15" height="15" fill="#222" />
      <rect x="6" y="5" width="9" height="9" fill="#a9a9a9" />
    </g>
  ),
  copilot: (
    <g>
      <path d="M5 3q1-2 4-2h4q2 0 3 3l.5 2H12L9 8l-2 6q-1 2-3 1-4-1-2-6z" fill="#2b86d9" />
      <path d="M2 9q-2 5 2 6 2 1 3-1l1-4z" fill="#4fbf7b" />
      <path d="M15 17q-1 2-4 2H7q-2 0-3-3l-.5-2H8l3-2 2-6q1-2 3-1 4 1 2 6z" fill="#d9548f" />
      <path d="M3.500 14H8l-1 5q-2 0-3-3z" fill="#f2b63c" />
      <path d="M13 6q1-2 3-1 4 1 2 6l-1 3q-4-3-4-8z" fill="#a065d8" />
      <path d="M10 6.500h3L10 13.500H7z" fill="#f0f0f0" />
    </g>
  ),
  store: (
    <g>
      <path d="M6 5V3q0-2 2-2h4q2 0 2 2v2" fill="none" stroke="#2e8fd0" strokeWidth="1.500" />
      <rect x="1" y="4.500" width="18" height="15" rx="2" fill="#16426e" />
      <path d="M6 8h3.600v3.600H6z" fill="#e8553b" />
      <path d="M10.400 8H14v3.600h-3.600z" fill="#7fba32" />
      <path d="M6 12.400h3.600V16H6z" fill="#2ba3e2" />
      <path d="M10.400 12.400H14V16h-3.600z" fill="#f4b929" />
    </g>
  ),
  teams: (
    <g>
      <circle cx="11" cy="4" r="3" fill="#5b62c3" />
      <circle cx="17" cy="5" r="2" fill="#6e75d5" />
      <path d="M7 8h9v6q0 5-5 5t-4-5z" fill="#6a70d0" />
      <path d="M15 8h5v5q0 4-4 4z" fill="#8287df" />
      <rect x="0" y="6" width="10" height="9" rx="1" fill="#444bab" />
      <text x="5" y="13" fontSize="8" fontWeight="700" textAnchor="middle" fill="#fff" fontFamily="Open Sans">
        T
      </text>
    </g>
  ),
  explorer: (
    <g>
      <path d="M0 2h7l2 2h11v15H0z" fill="#e0a626" />
      <path d="M0 5h20v14H0z" fill="#fbd253" />
      <path d="M4 19v-4q0-2 2-2h8q2 0 2 2v4z" fill="#1d79bd" />
    </g>
  ),
  edge: (
    <g>
      <circle cx="10" cy="10" r="9.800" fill="#1f7fcf" />
      <path d="M.5 8C3-3 19.500-1 19.800 9c0 4-6 5-7.800 3 2-3-1-6-4-5.500S2 8 .5 11z" fill="#3cc3b0" />
      <path d="M8 7c-5 3-3 11 4 11 3 0 5-1 6-3-6 2-11-2-8-7z" fill="#15509b" />
      <path d="M9.500 10q-.5-2 1-2.500 2.500.500 1.500 4-1 1.500-2.500-1.500z" fill="#f0f0f0" />
    </g>
  ),
  webex: (
    <g>
      <rect x="0" y="0" width="20" height="20" rx="4" fill="#111a28" />
      <path d="M3 6q2 9 4 7t1-6 4 0-1 6" fill="none" stroke="#36c1a2" strokeWidth="2.400" />
      <path d="M9 12q3 3 5-1t3-5" fill="none" stroke="#2d7be0" strokeWidth="3" />
    </g>
  ),
  linkedin: (
    <g>
      <rect x="1" y="2" width="18" height="18" rx="1.500" fill="#0a62ac" />
      <text x="10" y="17" fontSize="15" fontWeight="700" textAnchor="middle" fill="#fff" fontFamily="Open Sans">
        in
      </text>
    </g>
  ),
  qgis: <QLogo />,
  timer: (
    <g>
      <rect x="0" y="0" width="20" height="20" rx="1" fill="#1a70c0" />
      <circle cx="10" cy="10" r="8" stroke="#bcdcf5" strokeDasharray="1 2" fill="none" />
      <circle cx="10" cy="11" r="4.800" fill="none" stroke="#fff" strokeWidth="2.500" />
      <path d="M10 11l5.500-6.500" stroke="#fff" strokeWidth="2.500" />
    </g>
  ),
  obs: (
    <g>
      <circle cx="8.500" cy="11" r="8.500" fill="#262426" />
      <path d="M8.500 11c-3-1-4-5-1-7M8.500 11c3-2 7 0 7 3M8.500 11c0 4-4 6-6 4" fill="none" stroke="#ccc" strokeWidth="1.300" />
      <circle cx="16" cy="4" r="4.500" fill="#e8111c" />
    </g>
  ),
  whatsapp: (
    <g>
      <path d="M1 19l1.500-5A8.500 8.500 0 1110 19a9 9 0 01-4.500-1.200z" fill="#fff" stroke="#279c5c" strokeWidth="2" />
      <path d="M6 6c-1 3 4 9 8 8l1-2-3-1.500-1.200 1.200C9 11 8 9.500 7.800 8.500L9 7.300 8 5z" fill="#279c5c" />
    </g>
  ),
  excel: (
    <g>
      <rect x="5" y="1" width="15" height="18" rx="1.500" fill="#21a164" />
      <path d="M12 1h8v6h-8z" fill="#35c481" />
      <path d="M5 13h15v6H5z" fill="#155c38" />
      <rect x="0" y="6" width="10" height="9" rx="1" fill="#107941" />
      <text x="5" y="13.200" fontSize="8" fontWeight="700" textAnchor="middle" fill="#fff" fontFamily="Open Sans">
        X
      </text>
    </g>
  ),
  chevron: <path d="M3.500 13L10 6.500l6.500 6.500" stroke="#333" strokeWidth="1.600" />,
  cloudGrey: (
    <g>
      <CloudShape fill="#d3d3d3" line="#444" />
      <path d="M3 13q7-7 14 0" stroke="#666" strokeWidth="1.700" />
    </g>
  ),
  cloudBlue: <CloudShape fill="#1f86d6" line="#1a74bf" />,
  mic: (
    <g stroke="#3d628c" strokeWidth="1.500">
      <rect x="7" y="1" width="6" height="11" rx="3" fill="#cfe0f2" />
      <path d="M4 9a6 6 0 0012 0M10 15v4" />
    </g>
  ),
  wifi: (
    <g stroke="#333" strokeWidth="1.500">
      <path d="M1 8q9-8 18 0M4 11q6-5.500 12 0M7 14q3-2.500 6 0" />
      <circle cx="10" cy="16.500" r="1" fill="#333" />
    </g>
  ),
  sound: (
    <g stroke="#555" strokeWidth="1.400">
      <path d="M1 7.500h3.500L9 3.500v13l-4.500-4H1zM12 7q2 3 0 6M14.500 5q4 5 0 10M17 3q5.500 7 0 14" />
    </g>
  ),
  battery: (
    <g stroke="#333" strokeWidth="1.500">
      <path d="M7 5h10v10H5v-4M18.500 8.500v3" />
      <path d="M1 3l6 0-2 4h3l-6 6 1-5H1z" fill="#222" strokeWidth=".6" />
    </g>
  ),
  bell: (
    <g>
      <path d="M2 15q2.500-2 2.500-8a5.500 5.500 0 0111 0q0 6 2.500 8z" fill="#444" stroke="#222" />
      <path d="M8 18h4" stroke="#222" strokeWidth="2" />
      <path d="M11 3h6l-5 6h6" fill="none" stroke="#f4f4f4" strokeWidth="3" />
      <path d="M11 3h6l-5 6h6" fill="none" stroke="#222" strokeWidth="1.400" />
    </g>
  ),
};

const AppIcon = ({ name, size = 19 }) => (
  <Glyph viewBox="0 0 20 20" $size={size} fill="none">
    {APPS[name]}
  </Glyph>
);

const PINNED = [
  { name: "copilot" },
  { name: "store" },
  { name: "teams" },
  { name: "explorer", run: true },
  { name: "edge", run: true },
  { name: "webex", run: true },
  { name: "linkedin", run: true, badge: "2", left: 18 },
  { name: "qgis", run: true, wide: true, bg: "#fbfbfb", mark: "#2273b8" },
  { name: "timer", run: true, bg: "#e2a0a3", mark: "#c4161f" },
  { name: "obs", run: true },
  { name: "whatsapp", run: true, badge: "99+", left: 14 },
  { name: "excel", run: true },
];

const PointerOverlay = styled.svg`
  position: absolute;
  left: 142px;
  top: 200px;
  width: 10px;
  height: 14px;
`;

export default function App() {
  return (
    <Screen>
      <GlobalStyle />
      <Desktop>
        <TitleBar>
          <Icon name="qgis" size={12} />
          <TitleText>*CN — QGIS</TitleText>
          <WindowControls viewBox="0 0 82 10">
            <path d="M0 5.500h8M37.500 1.500h7v7h-7zM74 1l7.500 7.500M81.500 1L74 8.500" />
          </WindowControls>
        </TitleBar>
        <MenuBar>
          {MENU.map(([word, w, mnemonic]) => (
            <MenuItem key={word} $w={w}>
              <MenuLabel word={word} mnemonic={mnemonic} />
            </MenuItem>
          ))}
        </MenuBar>
        <Bar>
          <Tools items={MAIN_BAR} />
        </Bar>
        <Bar>
          <Tools items={DATA_BAR} />
        </Bar>
        <Bar>
          <Tools items={DIGITIZE_BAR} />
        </Bar>
        <Bar>
          <Tools items="| plugin film _ |" />
        </Bar>
        <Work>
          <LeftDock>
            <DockTitle $h={16} $pr={2}>
              <span>Layers</span>
              <DockButtons />
            </DockTitle>
            <DockBar $h={24} $pl={2}>
              <SmallSlot><Icon name="brush" size={12.5} /></SmallSlot>
              <SmallSlot><Icon name="groupAdd" size={13} /></SmallSlot>
              <SmallSlot><Icon name="eye" size={13} /><CornerCaret /></SmallSlot>
              <SmallSlot><Icon name="funnel" size={13} /><CornerCaret /></SmallSlot>
              <SmallSlot><Icon name="expr" size={13} /></SmallSlot>
              <Caret $off />
              <SmallSlot><Icon name="expand" size={12.5} /></SmallSlot>
              <SmallSlot><Icon name="collapse" size={12.5} /></SmallSlot>
              <SmallSlot><Icon name="remove" size={12.5} /></SmallSlot>
            </DockBar>
            <LayerTree>
              <Layer name="Reprojected" italic hover max="2" min="1" />
              <Layer name="LULCHINDON22" checked max="11" min="1" />
              <Layer name="SoilTypeHindon" italic closed />
            </LayerTree>
            <DockTitle $h={24} $pr={1} $pl={4} $off>
              <span>Browser (2)</span>
              <ClosedButton>×</ClosedButton>
            </DockTitle>
            <DockBar $h={23} $pl={2}>
              <SmallSlot><Icon name="addLayer" size={12.5} /></SmallSlot>
              <SmallSlot><Icon name="refresh" size={13} /></SmallSlot>
              <SmallSlot><Icon name="funnel" size={13} /></SmallSlot>
              <SmallSlot><Icon name="collapse" size={12.5} /></SmallSlot>
              <SmallSlot><Icon name="info" size={13} /></SmallSlot>
            </DockBar>
            <BrowserBody>
              <BrowserTree>
                <BrowserRow $pl={16}>
                  <Icon name="star" size={12} />
                  Favorites
                </BrowserRow>
                <BrowserRow $pl={4}>
                  <Caret $gap={0} />
                  <Icon name="bookmark" size={12} />
                  Spatial Bookmarks
                </BrowserRow>
                <BrowserRow $pl={28}>
                  <Icon name="folder" size={12} />
                  Project Bookmarks
                </BrowserRow>
              </BrowserTree>
              <ScrollTrack>
                <ScrollEnd><StepUp /></ScrollEnd>
                <Thumb $h={21} />
              </ScrollTrack>
            </BrowserBody>
          </LeftDock>
          <Canvas>
            <RiverBasin />
          </Canvas>
          <RightDock>
            <DockTitle $h={16} $pr={0}>
              <span>Processing Toolbox</span>
              <DockButtons />
            </DockTitle>
            <DockBar $h={24} $pl={2}>
              <SmallSlot><Icon name="gears" size={13} /><CornerCaret /></SmallSlot>
              <SmallSlot><Icon name="pythonSmall" size={12} /><CornerCaret /></SmallSlot>
              <SmallSlot><Icon name="clock" size={13} /></SmallSlot>
              <SmallSlot><Icon name="doc" size={13} /></SmallSlot>
              <Rule />
              <SmallSlot><Icon name="playOff" size={12} /></SmallSlot>
              <Rule />
              <SmallSlot><Icon name="wrench" size={13} /></SmallSlot>
            </DockBar>
            <SearchField>
              <svg viewBox="0 0 10 10">
                <circle cx="4" cy="4" r="3.300" />
                <path d="M6.500 6.500l3 3" />
              </svg>
              <span>rec</span>
              <svg viewBox="0 0 12 10">
                <path d="M0 5l3.500-4.500H12v9H3.500z" fill="#666" stroke="none" />
                <path d="M5 3l4 4M9 3L5 7" stroke="#fff" strokeWidth="1.200" />
              </svg>
            </SearchField>
            <AlgoBox>
              <AlgoList>
                {ALGOS.map(([icon, label, group], i) => (
                  <AlgoRow key={i} $group={group} $lit={i === 0}>
                    {group && (
                      <Twisty $pull={-4}>
                        <i />
                      </Twisty>
                    )}
                    <Icon name={icon} size={group ? 12 : 11.5} />
                    {label}
                  </AlgoRow>
                ))}
              </AlgoList>
              <ScrollTrack>
                <ScrollEnd><StepUp /></ScrollEnd>
                <Thumb $h={56} />
                <Filler />
                <ScrollEnd><StepDown /></ScrollEnd>
              </ScrollTrack>
            </AlgoBox>
            <DockTitle $h={24} $pt={4} $pr={0}>
              <span>Identify Results</span>
              <DockButtons />
            </DockTitle>
            <DockBar $h={19} $mb={4.8} $pl={2}>
              <SmallSlot><Icon name="tableView" size={13} /></SmallSlot>
              <Rule />
              <SmallSlot><Icon name="expand" size={12.5} /></SmallSlot>
              <SmallSlot><Icon name="collapse" size={12.5} /></SmallSlot>
              <SmallSlot><Icon name="expandNew" size={12.5} /></SmallSlot>
              <Rule />
              <SmallSlot><Icon name="clear" size={13} /></SmallSlot>
              <Rule />
              <SmallSlot><Icon name="copyDoc" size={12} /></SmallSlot>
              <SmallSlot><Icon name="print" size={12} /></SmallSlot>
              <Rule />
              <SmallSlot><Icon name="identifySel" size={13} /></SmallSlot>
              <Caret />
              <More>»</More>
            </DockBar>
            <ResultHead>
              <span>Feature</span>
              <b>Value</b>
            </ResultHead>
            <ResultBody />
            <FieldRow $h={29} $label={26}>
              <span>Mode</span>
              <Combo $w={181} $h={19}>
                Current Layer
                <Caret />
              </Combo>
            </FieldRow>
            <FieldRow $h={20} $label={23}>
              <span>View</span>
              <Combo $w={52} $h={18}>
                Tree
                <Caret />
              </Combo>
            </FieldRow>
          </RightDock>
        </Work>
        <Taskbar>
          <TaskSlot $w={52}>
            <AppIcon name="weather" size={21} />
            <Badge $bg="#b3161d" $left={25} $top={2}>1</Badge>
          </TaskSlot>
          <TaskSlot $ml={89}>
            <AppIcon name="start" />
          </TaskSlot>
          <SearchPill>
            <Glyph viewBox="0 0 12 12" $size={12} fill="none" stroke="#222" strokeWidth="1.400">
              <circle cx="5" cy="5" r="4" />
              <path d="M8 8l3.500 3.500" />
            </Glyph>
            <span>Search</span>
            <Briefcase>
              <Glyph viewBox="0 0 18 18" $size={17}>
                <path d="M6 5V2h6v3" fill="none" stroke="#5c3410" strokeWidth="1.600" />
                <rect x="0" y="4" width="18" height="12" rx="1" fill="#c9791b" />
                <path d="M0 4h18v5H0z" fill="#8d4d11" />
                <rect x="7.500" y="7.500" width="3" height="4" fill="#f9d24a" />
              </Glyph>
            </Briefcase>
          </SearchPill>
          <TaskSlot $w={36}>
            <AppIcon name="taskView" size={17} />
          </TaskSlot>
          {PINNED.map((app) => (
            <TaskSlot key={app.name}>
              <AppTile $bg={app.bg}>
                <AppIcon name={app.name} />
              </AppTile>
              {app.run && <RunMark $wide={app.wide} $c={app.mark} />}
              {app.badge && <Badge $left={app.left}>{app.badge}</Badge>}
            </TaskSlot>
          ))}
          <TaskSlot $w={25.5} $ml={46}><AppIcon name="chevron" size={12} /></TaskSlot>
          <TaskSlot $w={25.5}><AppIcon name="cloudGrey" size={13} /></TaskSlot>
          <TaskSlot $w={25.5}><AppIcon name="cloudBlue" size={13} /></TaskSlot>
          <TaskSlot $w={25.5}><AppIcon name="mic" size={13} /></TaskSlot>
          <Language>
            ENG
            <br />
            IN
          </Language>
          <TaskSlot $w={19} $ml={2}><AppIcon name="wifi" size={12} /></TaskSlot>
          <TaskSlot $w={19}><AppIcon name="sound" size={12} /></TaskSlot>
          <TaskSlot $w={19}><AppIcon name="battery" size={13} /></TaskSlot>
          <DateTime>
            06:53
            <br />
            17-08-2024
          </DateTime>
          <TaskSlot $w={24}><AppIcon name="bell" size={12} /></TaskSlot>
        </Taskbar>
      </Desktop>
      <PointerOverlay viewBox="0 0 10 14">
        <path d="M1 1v10l2.500-2.500L5 12l1.500-.6L5 8h3.500z" fill="#fff" stroke="#555" strokeWidth=".8" />
      </PointerOverlay>
    </Screen>
  );
}
